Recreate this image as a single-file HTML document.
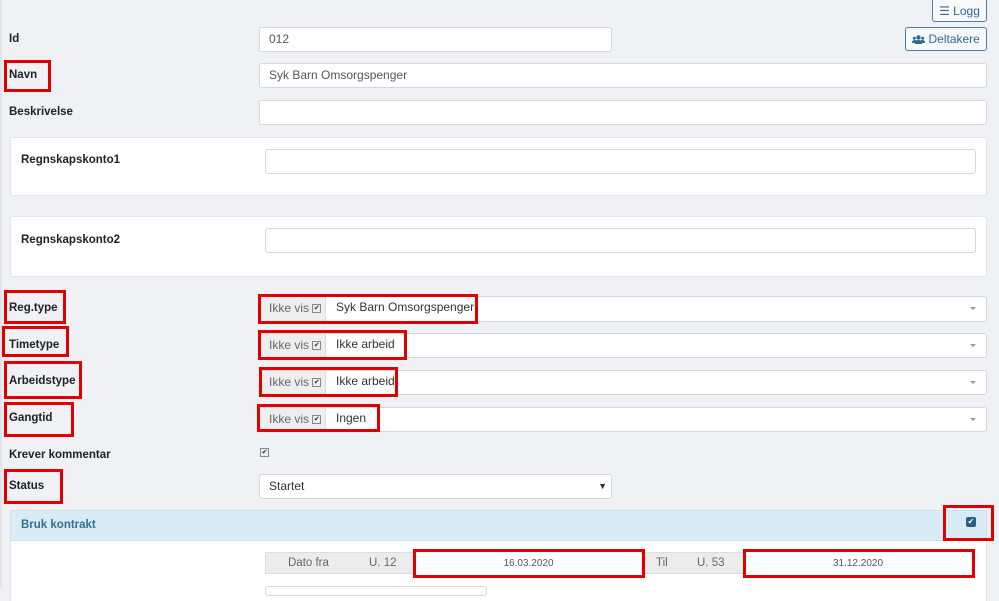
<!DOCTYPE html><html><head><style>
body{margin:0;width:999px;height:589px;background:#eff1f4;font-family:"Liberation Sans",sans-serif;position:relative;overflow:hidden;color:#333}
.a{position:absolute;box-sizing:border-box}
.lb{font-weight:bold;font-size:11.5px;color:#222}
.in{background:#fff;border:1px solid #d4d7db;border-radius:3px;font-size:12px;color:#555;padding-left:9px;line-height:22px}
.rb{border:3px solid #e00000}
.ad{background:#eee;color:#666;font-size:12px;line-height:23px;padding-left:9px;border-right:1px solid #ddd}
.cb{display:inline-block;width:7px;height:7px;border:1px solid #888;background:#eee;font-size:7px;line-height:7px;text-align:center;vertical-align:middle;color:#333}
.car{position:absolute;right:10px;top:10px;width:0;height:0;border-left:3px solid transparent;border-right:3px solid transparent;border-top:3px solid #999}
</style></head><body>
<div class="a" style="left:0;top:0;width:2px;height:589px;background:#e2e4e8"></div>
<div class="a" style="left:932px;top:-2px;width:55px;height:24px;border:1px solid #4b7ea3;border-radius:3px;background:#f7f9fb;color:#2e6a96;font-size:12px;line-height:24px;text-align:center">☰ Logg</div>
<div class="a" style="left:905px;top:27px;width:82px;height:24px;border:1px solid #4b7ea3;border-radius:3px;background:#f7f9fb;color:#2e6a96;font-size:12px;line-height:22px;text-align:center"><svg width="13" height="9" viewBox="0 0 13 9" style="vertical-align:-1px"><circle cx="6.5" cy="2.5" r="2.2" fill="#2e6a96"/><path d="M3 9c0-3 1.5-4 3.5-4s3.5 1 3.5 4z" fill="#2e6a96"/><circle cx="2.3" cy="3.3" r="1.5" fill="#2e6a96"/><circle cx="10.7" cy="3.3" r="1.5" fill="#2e6a96"/><path d="M0 8c0-2 1-3 2.5-3s2 .5 2 .5L3.5 8z M13 8c0-2-1-3-2.5-3s-2 .5-2 .5L9.5 8z" fill="#2e6a96"/></svg> Deltakere</div>

<div class="a lb" style="left:9px;top:33px">Id</div>
<div class="a in" style="left:259px;top:27px;width:353px;height:25px">012</div>
<div class="a lb" style="left:9px;top:69px">Navn</div>
<div class="a rb" style="left:4px;top:60px;width:47px;height:32px"></div>
<div class="a in" style="left:259px;top:63px;width:728px;height:25px">Syk Barn Omsorgspenger</div>
<div class="a lb" style="left:9px;top:106px">Beskrivelse</div>
<div class="a in" style="left:259px;top:100px;width:728px;height:25px"></div>

<div class="a" style="left:10px;top:137px;width:977px;height:59px;background:#fff;border:1px solid #e3e5e8;border-radius:3px"></div>
<div class="a lb" style="left:21px;top:154px">Regnskapskonto1</div>
<div class="a in" style="left:265px;top:149px;width:711px;height:25px"></div>
<div class="a" style="left:10px;top:216px;width:977px;height:61px;background:#fff;border:1px solid #e3e5e8;border-radius:3px"></div>
<div class="a lb" style="left:21px;top:234px">Regnskapskonto2</div>
<div class="a in" style="left:265px;top:228px;width:711px;height:25px"></div>

<div class="a in" style="left:259px;top:296px;width:728px;height:26px;padding:0"><div class="a ad" style="left:0;top:0;width:66px;height:24px">Ikke vis <span class="cb">✔</span></div><span style="position:absolute;left:76px;top:-1px;color:#333">Syk Barn Omsorgspenger</span><div class="car"></div></div>
<div class="a in" style="left:259px;top:333px;width:728px;height:25px;padding:0"><div class="a ad" style="left:0;top:0;width:66px;height:23px">Ikke vis <span class="cb">✔</span></div><span style="position:absolute;left:76px;top:-1px;color:#333">Ikke arbeid</span><div class="car"></div></div>
<div class="a in" style="left:259px;top:370px;width:728px;height:25px;padding:0"><div class="a ad" style="left:0;top:0;width:66px;height:23px">Ikke vis <span class="cb">✔</span></div><span style="position:absolute;left:76px;top:-1px;color:#333">Ikke arbeid</span><div class="car"></div></div>
<div class="a in" style="left:259px;top:407px;width:728px;height:25px;padding:0"><div class="a ad" style="left:0;top:0;width:66px;height:23px">Ikke vis <span class="cb">✔</span></div><span style="position:absolute;left:76px;top:-1px;color:#333">Ingen</span><div class="car"></div></div>

<div class="a rb" style="left:258px;top:294px;width:220px;height:30px"></div>
<div class="a rb" style="left:258px;top:330px;width:149px;height:30px"></div>
<div class="a rb" style="left:259px;top:367px;width:139px;height:30px"></div>
<div class="a rb" style="left:257px;top:404px;width:123px;height:28px"></div>

<div class="a lb" style="left:9px;top:302px">Reg.type</div>
<div class="a rb" style="left:4px;top:290px;width:62px;height:34px"></div>
<div class="a lb" style="left:9px;top:339px">Timetype</div>
<div class="a rb" style="left:2px;top:326px;width:67px;height:31px"></div>
<div class="a lb" style="left:9px;top:375px">Arbeidstype</div>
<div class="a rb" style="left:4px;top:361px;width:78px;height:38px"></div>
<div class="a lb" style="left:9px;top:412px">Gangtid</div>
<div class="a rb" style="left:4px;top:402px;width:70px;height:35px"></div>

<div class="a lb" style="left:9px;top:449px">Krever kommentar</div>
<div class="a" style="left:260px;top:444px"><span class="cb">✔</span></div>
<div class="a lb" style="left:9px;top:480px">Status</div>
<div class="a rb" style="left:4px;top:469px;width:59px;height:35px"></div>
<div class="a in" style="left:259px;top:474px;width:353px;height:25px;color:#333">Startet<span style="position:absolute;right:4px;top:0;font-size:9px">▼</span></div>

<div class="a" style="left:10px;top:510px;width:977px;height:31px;background:#d9ebf4;border:1px solid #cfe2ec"></div>
<div class="a" style="left:21px;top:519px;font-weight:bold;font-size:11.5px;color:#31708f">Bruk kontrakt</div>
<div class="a" style="left:966px;top:517px;width:10px;height:10px;background:#2f5f80;border-radius:2px;color:#fff;font-size:8px;line-height:10px;text-align:center">✔</div>
<div class="a rb" style="left:943px;top:505px;width:51px;height:36px"></div>
<div class="a" style="left:10px;top:541px;width:977px;height:60px;background:#fff;border-left:1px solid #e3e5e8;border-right:1px solid #e3e5e8"></div>

<div class="a" style="left:265px;top:552px;width:480px;height:22px;background:#ececec;border:1px solid #ddd;font-size:11.5px;color:#666;line-height:20px"><span style="position:absolute;left:22px">Dato fra</span><span style="position:absolute;left:103px">U. 12</span><span style="position:absolute;left:390px">Til</span><span style="position:absolute;left:431px">U. 53</span></div>
<div class="a" style="left:416px;top:552px;width:225px;height:22px;background:#fff;font-size:10px;color:#555;text-align:center;line-height:23px">16.03.2020</div>
<div class="a" style="left:745px;top:552px;width:226px;height:22px;background:#fff;font-size:10px;color:#555;text-align:center;line-height:23px">31.12.2020</div>
<div class="a rb" style="left:413px;top:549px;width:232px;height:29px"></div>
<div class="a rb" style="left:743px;top:549px;width:232px;height:29px"></div>
<div class="a" style="left:265px;top:586px;width:222px;height:10px;border:1px solid #d4d7db;border-radius:3px;background:#fff"></div>
</body></html>
